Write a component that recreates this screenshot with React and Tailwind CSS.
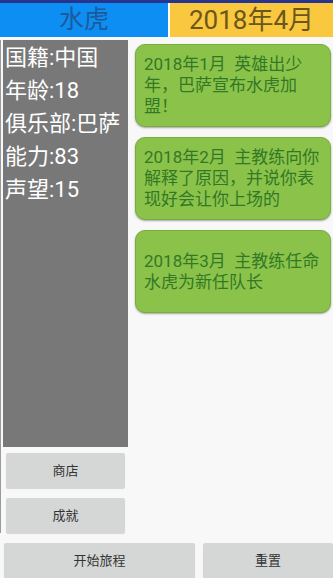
const profile = ["国籍:中国", "年龄:18", "俱乐部:巴萨", "能力:83", "声望:15"];

const events = [
  "2018年1月  英雄出少年，巴萨宣布水虎加盟！",
  "2018年2月  主教练向你解释了原因，并说你表现好会让你上场的",
  "2018年3月  主教练任命水虎为新任队长",
];

const font = "font-['Roboto','Noto_Sans_CJK_SC',sans-serif]";

function GrayButton({ children, className = "" }) {
  return (
    <button
      className={`flex h-[35px] items-center justify-center rounded-[2px] bg-[#d5d7d7] text-[13px] text-[#333] shadow-[0_1px_1px_rgba(0,0,0,0.15)] ${className}`}
    >
      {children}
    </button>
  );
}

export default function App() {
  return (
    <div className={`flex h-[578px] w-[333px] flex-col overflow-hidden bg-[#f8f8f8] ${font}`}>
      <div className="h-[3px] bg-[#27358f]" />
      <header className="flex h-[34px] gap-[2px] bg-white">
        <div className="flex w-[168px] items-center justify-center bg-[#0c8ef2] text-[25px] text-[#1d5a9c]">
          水虎
        </div>
        <div className="flex flex-1 items-center justify-center bg-[#fac83e] text-[26px] text-[#6b561c]">
          2018年4月
        </div>
      </header>

      <div className="mt-[3px] flex flex-1">
        <div className="flex w-[128px] flex-col border-l-[1px] border-[#9a9a9a] pl-[2px]">
          <div className="h-[407px] bg-[#787878] pl-[2px] pt-[1px] text-[22px] leading-[33px] text-white">
            {profile.map((line) => (
              <div key={line} className="whitespace-nowrap">
                {line}
              </div>
            ))}
          </div>
          <div className="mt-[6px] flex flex-col gap-[10px] px-[3px]">
            <GrayButton>商店</GrayButton>
            <GrayButton>成就</GrayButton>
          </div>
        </div>

        <div className="ml-[7px] flex w-[196px] flex-col gap-[10px] pt-[4px]">
          {events.map((text) => (
            <div
              key={text}
              className="flex h-[83px] items-center rounded-[10px] border border-[#79ad3f] bg-[#8bc34a] pl-[8px] pr-[6px] text-[17px] leading-[21px] text-[#337826] shadow-[0_1px_2px_rgba(0,0,0,0.35)]"
            >
              <p className="whitespace-pre-wrap">{text}</p>
            </div>
          ))}
        </div>
      </div>

      <div className="mt-[10px] flex gap-[8px] pl-[4px]">
        <GrayButton className="w-[191px]">开始旅程</GrayButton>
        <GrayButton className="flex-1">重置</GrayButton>
      </div>
    </div>
  );
}
